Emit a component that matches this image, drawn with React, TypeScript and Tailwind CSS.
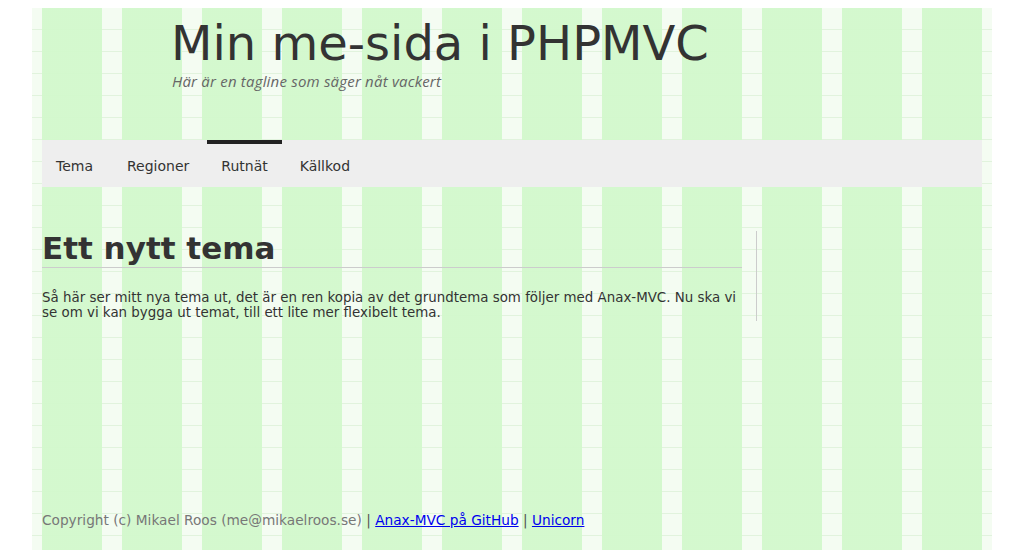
import React from "react";

export default function App() {
  const items = [
    { t: "Tema", ml: "" },
    { t: "Regioner", ml: "ml-[6px]" },
    { t: "Rutnät", ml: "ml-[4px]" },
    { t: "Källkod", ml: "ml-[4px]" },
  ];
  return (
    <div className="w-full min-h-[558px] bg-white pt-[8px] pb-[8px] font-['DejaVu_Sans',sans-serif] text-[#333]">
      <div className="mx-auto w-[960px] h-[542px] flex flex-col [background:repeating-linear-gradient(to_right,transparent_0,transparent_10px,rgba(210,248,204,0.94)_10px,rgba(210,248,204,0.94)_70px,transparent_70px,transparent_80px),linear-gradient(to_bottom,transparent_21px,#e1f3dd_21px)_0_0/100%_22px,#f4fcf2]">
        <header className="h-[132px] shrink-0">
          <div className="pt-[11px] pl-[139px] text-[48px] leading-none text-[#333]">
            Min me-sida i PHPMVC
          </div>
          <div className="mt-[7px] pl-[140px] font-['Open_Sans',sans-serif] italic text-[15px] tracking-[0.2px] leading-none text-[#666]">
            Här är en tagline som säger nåt vackert
          </div>
        </header>
        <nav className="mx-[10px] h-[47px] bg-[#eeeeee] flex shrink-0 text-[14px]">
          {items.map((it, i) => (
            <a
              key={it.t}
              className={
                "flex items-center px-[14px] pt-[1px] border-t-[4px] " +
                (i === 2 ? "border-[#222] " : "border-transparent ") +
                it.ml
              }
            >
              {it.t}
            </a>
          ))}
        </nav>
        <div className="mt-[44px] ml-[10px] flex items-stretch">
          <main className="w-[700px]">
            <h1 className="mt-[2px] pb-[3px] text-[31px] font-bold leading-none border-b border-[#cccccc]">
              Ett nytt tema
            </h1>
            <p className="mt-[22px] text-[13.4px] leading-[15.4px] text-[#333]">
              Så här ser mitt nya tema ut, det är en ren kopia av det grundtema som följer med Anax-MVC. Nu ska vi se om vi kan bygga ut temat, till ett lite mer flexibelt tema.
            </p>
          </main>
          <aside className="ml-[14px] w-px bg-[#cccccc]" />
        </div>
        <footer className="mt-auto pl-[10px] pb-[19px] text-[13.7px] text-[#777]">
          Copyright (c) Mikael Roos (me@mikaelroos.se) <span className="text-[#555]">|</span>{" "}
          <a className="text-[#0000ee] underline">Anax-MVC på GitHub</a>{" "}
          <span className="text-[#555]">|</span>{" "}
          <a className="text-[#0000ee] underline">Unicorn</a>
        </footer>
      </div>
    </div>
  );
}
